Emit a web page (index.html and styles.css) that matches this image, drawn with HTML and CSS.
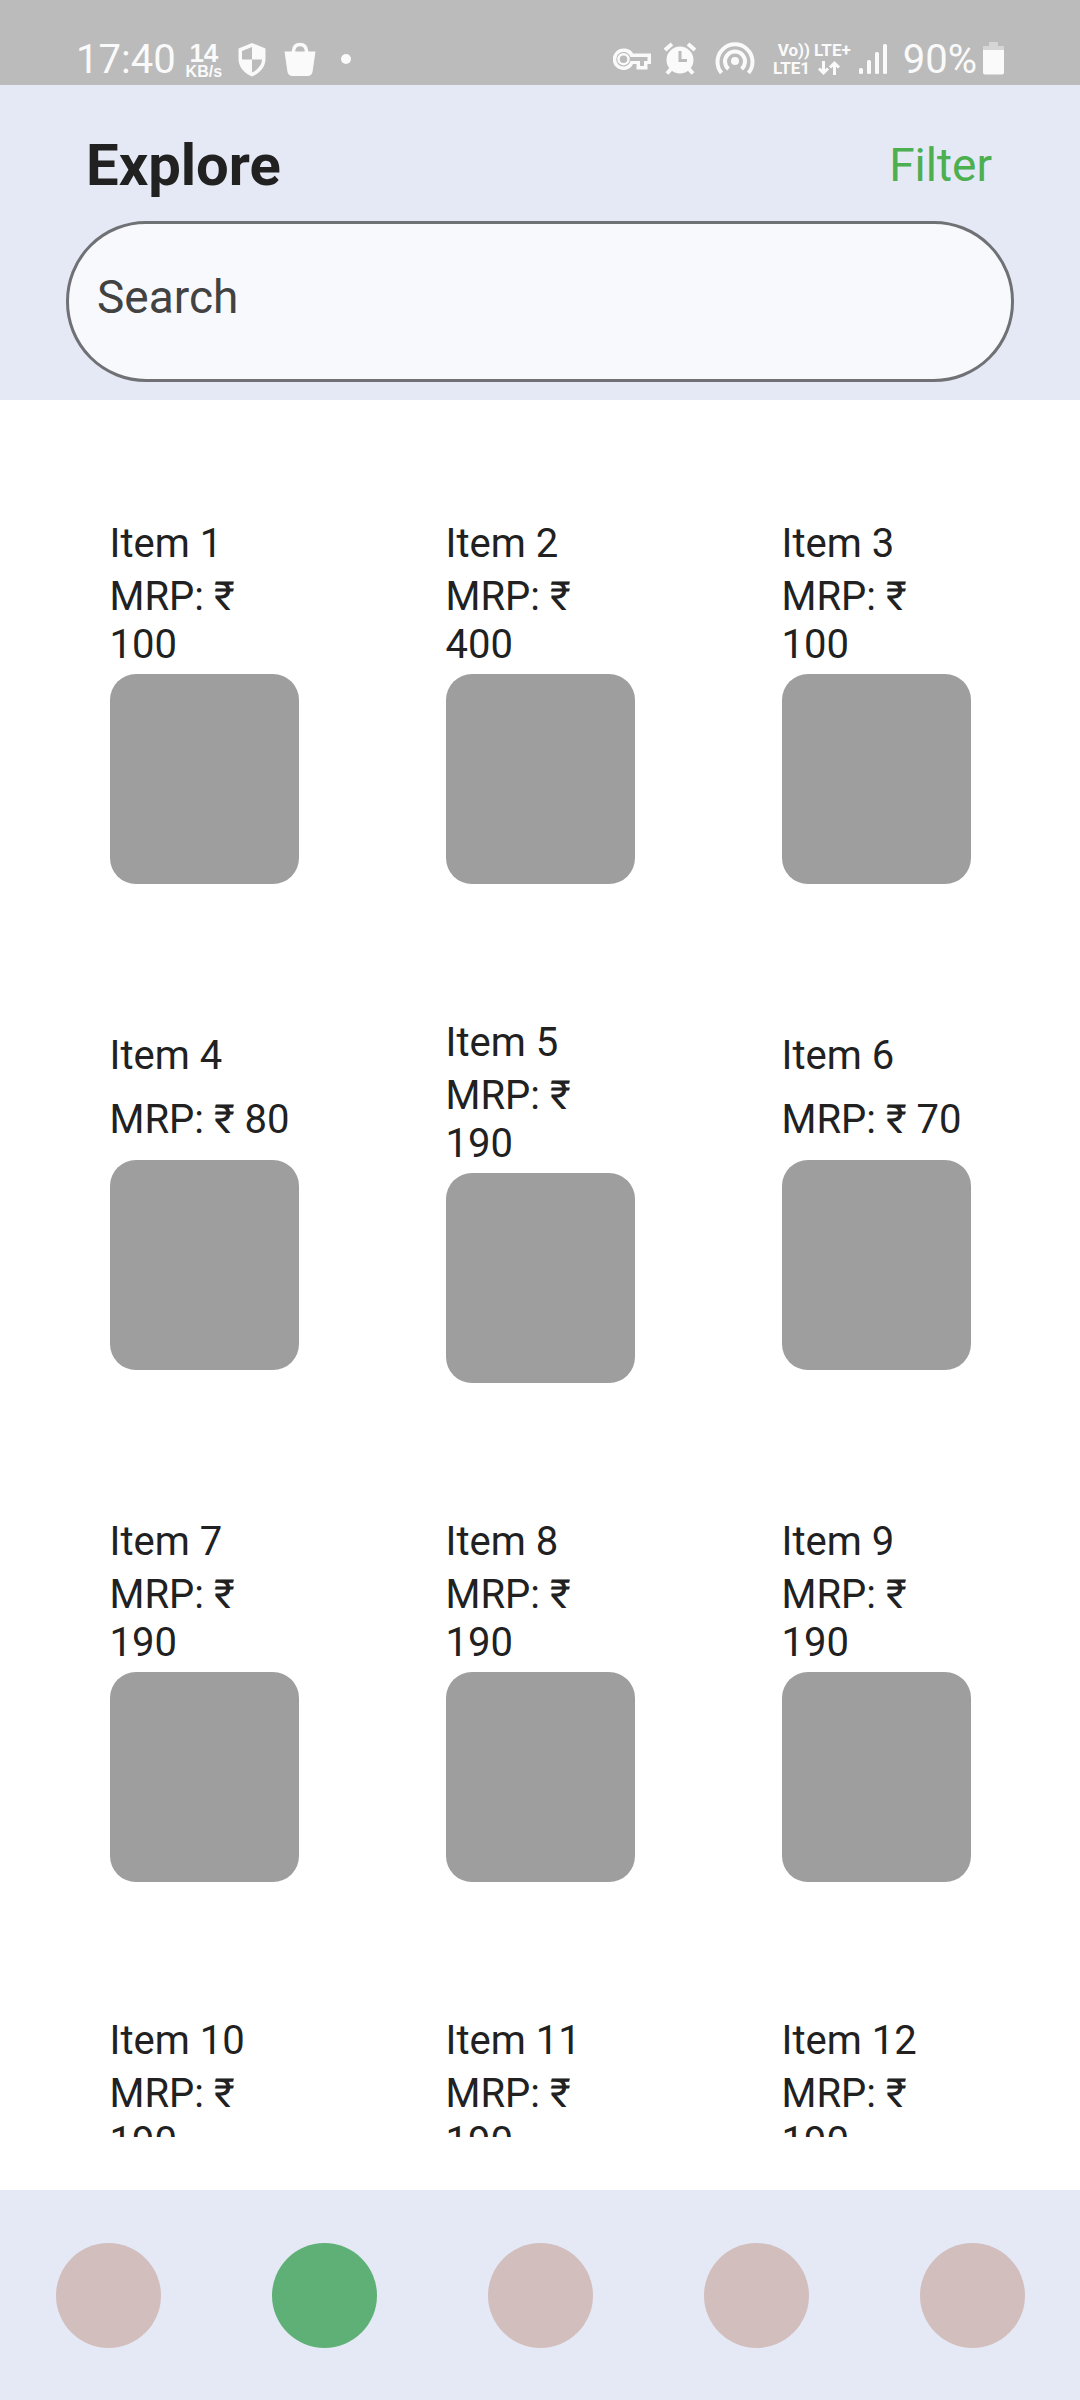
FILE: index.html
```html
<!DOCTYPE html>
<html lang="en">
<head>
<meta charset="utf-8">
<meta name="viewport" content="width=device-width, initial-scale=1">
<title>Explore</title>
<link rel="stylesheet" href="styles.css">
</head>
<body>
<div class="app">
  <div class="status">
    <div class="status-group status-left">
      <span class="status-num">17:40</span>
      <span class="speed"><b class="speed-value">14</b><b class="speed-unit">KB/s</b></span>
      <svg class="icon" width="28" height="36" viewBox="0 0 28 36" aria-hidden="true"><path fill-rule="evenodd" d="M14 2 27.500 7.500V18C27.500 26 21 33 14 35.500 7 33 .5 26 .5 18V7.500ZM14 6 4 10V18.500H14ZM14 18.500V31.500C19 29.500 24 24 24 18.500Z"/></svg>
      <svg class="icon" width="32" height="36" viewBox="0 0 32 36" aria-hidden="true"><path d="M.5 10.500H31.500L28.500 31Q27.500 35 23.500 35H8.500Q4.500 35 3.500 31Z"/><path class="line" stroke-width="3.500" d="M9.500 13V10Q10 3.500 16 3.500T22.500 10V13"/></svg>
      <svg class="icon icon-dot" width="10" height="36" viewBox="0 0 10 36" aria-hidden="true"><circle cx="5" cy="18" r="5"/></svg>
    </div>
    <div class="status-group">
      <svg class="icon icon-key" width="38" height="36" viewBox="0 0 38 36" aria-hidden="true"><path fill-rule="evenodd" d="M10.500 7.500C15 7.500 18.500 9 20 12.500H38V23H34.500V28.500H23.500V23H20C18.500 26.500 15 29 10.500 29A10.700 10.700 0 0 1 10.500 7.500ZM10.500 11A7 7 0 1 0 10.500 25.500C14 25.500 16.500 23 17.500 20H27V25H31V20H34.500V16H17.500C16.500 13 14 11 10.500 11Z"/><circle class="line" stroke-width="2.500" cx="10.500" cy="18.200" r="5"/></svg>
      <svg class="icon" width="34" height="36" viewBox="0 0 34 36" aria-hidden="true"><path fill-rule="evenodd" d="M17 5.500A13.500 13.500 0 1 1 17 32.500 13.500 13.500 0 0 1 17 5.500ZM15.500 10V21H24V18H18.500V10Z"/><path class="line" stroke-width="4" d="M2 9 9 3M25 3 32 9M8 28 4 32.500M26 28 30 32.500"/></svg>
      <svg class="icon icon-hotspot" width="40" height="36" viewBox="0 0 40 36" aria-hidden="true"><circle cx="20" cy="20" r="4"/><path class="line" stroke-width="4" d="M13.500 28A10 10 0 1 1 26.500 28"/><path class="line" stroke-width="4" d="M6.500 32A17.500 17.500 0 1 1 33.500 32"/></svg>
      <span class="network">
        <span class="volte">Vo))</span><span>LTE+</span>
        <span>LTE1</span>
        <svg class="icon" width="28" height="18" viewBox="0 0 28 18" aria-hidden="true"><path class="line" stroke-width="3" d="M9.500 2V14M5 9.500 9.500 14 14 9.500M20.500 16V4M16 8.500 20.500 4 25 8.500"/></svg>
      </span>
      <svg class="icon icon-signal" width="28" height="36" viewBox="0 0 28 36" aria-hidden="true"><rect x="0" y="27" width="4" height="6" rx="1.500"/><rect x="8" y="19" width="4" height="14" rx="1.500"/><rect x="16" y="11" width="4" height="22" rx="1.500"/><rect x="24" y="3" width="4" height="30" rx="1.500"/></svg>
      <span class="status-num status-charge">90%</span>
      <svg class="icon" width="21" height="36" viewBox="0 0 21 36" aria-hidden="true"><path class="faded" d="M6 1H15V5H20Q21 5 21 6V9H0V6Q0 5 1 5H6Z"/><path d="M0 9H21V31.500Q21 33.500 19 33.500H2Q0 33.500 0 31.500Z"/></svg>
    </div>
  </div>

  <header class="header">
    <div class="header-row">
      <h1 class="title">Explore</h1>
      <button class="filter" type="button">Filter</button>
    </div>
    <input class="search" type="search" placeholder="Search" aria-label="Search">
  </header>

  <main class="list">
    <article class="item"><h2 class="name">Item 1</h2><p class="price">MRP: ₹ 100</p><div class="thumb"></div></article>
    <article class="item"><h2 class="name">Item 2</h2><p class="price">MRP: ₹ 400</p><div class="thumb"></div></article>
    <article class="item"><h2 class="name">Item 3</h2><p class="price">MRP: ₹ 100</p><div class="thumb"></div></article>
    <article class="item item-short"><h2 class="name">Item 4</h2><p class="price">MRP: ₹ 80</p><div class="thumb"></div></article>
    <article class="item"><h2 class="name">Item 5</h2><p class="price">MRP: ₹ 190</p><div class="thumb"></div></article>
    <article class="item item-short"><h2 class="name">Item 6</h2><p class="price">MRP: ₹ 70</p><div class="thumb"></div></article>
    <article class="item"><h2 class="name">Item 7</h2><p class="price">MRP: ₹ 190</p><div class="thumb"></div></article>
    <article class="item"><h2 class="name">Item 8</h2><p class="price">MRP: ₹ 190</p><div class="thumb"></div></article>
    <article class="item"><h2 class="name">Item 9</h2><p class="price">MRP: ₹ 190</p><div class="thumb"></div></article>
    <article class="item"><h2 class="name">Item 10</h2><p class="price">MRP: ₹ 190</p><div class="thumb"></div></article>
    <article class="item"><h2 class="name">Item 11</h2><p class="price">MRP: ₹ 190</p><div class="thumb"></div></article>
    <article class="item"><h2 class="name">Item 12</h2><p class="price">MRP: ₹ 190</p><div class="thumb"></div></article>
  </main>

  <nav class="tabs" aria-label="Main">
    <button class="tab" type="button" aria-label="Home"></button>
    <button class="tab tab-active" type="button" aria-label="Explore" aria-current="page"></button>
    <button class="tab" type="button" aria-label="Cart"></button>
    <button class="tab" type="button" aria-label="Orders"></button>
    <button class="tab" type="button" aria-label="Account"></button>
  </nav>
</div>
</body>
</html>
```
FILE: styles.css
```css
* {
  box-sizing: border-box;
}

body {
  margin: 0;
  background: #fff;
  color: #212121;
  font-family: Roboto, "Noto Sans", sans-serif;
}

.app {
  display: flex;
  flex-direction: column;
  height: 100vh;
}

/* Status bar */
.status {
  display: flex;
  justify-content: space-between;
  flex: none;
  height: 85px;
  padding: 41px 76px 0;
  background: #bbb;
  color: #fafafa;
}

.status-group {
  display: flex;
  align-items: flex-start;
  gap: 16px;
}

.status-left {
  gap: 18px;
}

.status-num {
  font-size: 40px;
  line-height: 38px;
  font-weight: 400;
}

.status-charge {
  margin-right: -10px;
}

.speed {
  display: flex;
  flex-direction: column;
  align-items: center;
  margin: 0 -2px 0 -8px;
  font-family: "Liberation Sans", sans-serif;
}

.speed-value {
  font-size: 26px;
  line-height: 24px;
}

.speed-unit {
  font-size: 16px;
  line-height: 14px;
}

.network {
  display: grid;
  grid-template-columns: auto auto;
  column-gap: 4px;
  font-size: 17px;
  line-height: 18px;
  font-weight: 700;
}

.volte {
  text-align: right;
}

.icon {
  display: block;
  flex: none;
  fill: #fafafa;
}

.icon-dot {
  margin-left: 7px;
}

.icon-key {
  margin-right: -4px;
}

.icon-hotspot {
  margin: 0 2px;
}

.icon-signal {
  margin-left: -8px;
}

.line {
  fill: none;
  stroke: #fafafa;
}

.faded {
  fill: #d6d6d6;
}

/* Header */
.header {
  flex: none;
  padding: 48px 66px 18px;
  background: #e5e9f5;
}

.header-row {
  display: flex;
  align-items: center;
  justify-content: space-between;
  height: 64px;
  margin-bottom: 24px;
  padding: 0 22px 0 20px;
}

.title {
  margin: 0;
  font-size: 58px;
  line-height: 64px;
  font-weight: 700;
}

.filter {
  padding: 0;
  border: 0;
  background: none;
  color: #4caf50;
  font: inherit;
  font-size: 46px;
  line-height: 56px;
}

.search {
  display: block;
  width: 100%;
  height: 161px;
  padding: 0 28px 10px;
  border: 3px solid #707175;
  border-radius: 80px;
  background: #f7f9fd;
  color: #424242;
  font: inherit;
  font-size: 46px;
  appearance: none;
}

.search::placeholder {
  color: #424242;
  opacity: 1;
}

/* Items */
.list {
  display: grid;
  grid-template-columns: repeat(3, 1fr);
  grid-auto-rows: max-content;
  row-gap: 96px;
  align-items: center;
  justify-items: center;
  flex: 1 1 0;
  min-height: 0;
  margin-bottom: 53px;
  padding: 81px 36px 0;
  overflow: hidden;
}

.item {
  display: flex;
  flex-direction: column;
  gap: 5px;
  width: 189px;
  padding-top: 39px;
}

.item-short {
  gap: 16px;
}

.name,
.price {
  margin: 0;
  font-size: 40px;
  line-height: 48px;
  font-weight: 400;
}

.thumb {
  height: 210px;
  border-radius: 26px;
  background: #9e9e9e;
}

/* Bottom tabs */
.tabs {
  display: flex;
  align-items: center;
  justify-content: space-around;
  flex: none;
  height: 210px;
  background: #e5e9f5;
}

.tab {
  width: 105px;
  height: 105px;
  padding: 0;
  border: 0;
  border-radius: 50%;
  background: #d2bebd;
}

.tab-active {
  background: #5fb077;
}
```
